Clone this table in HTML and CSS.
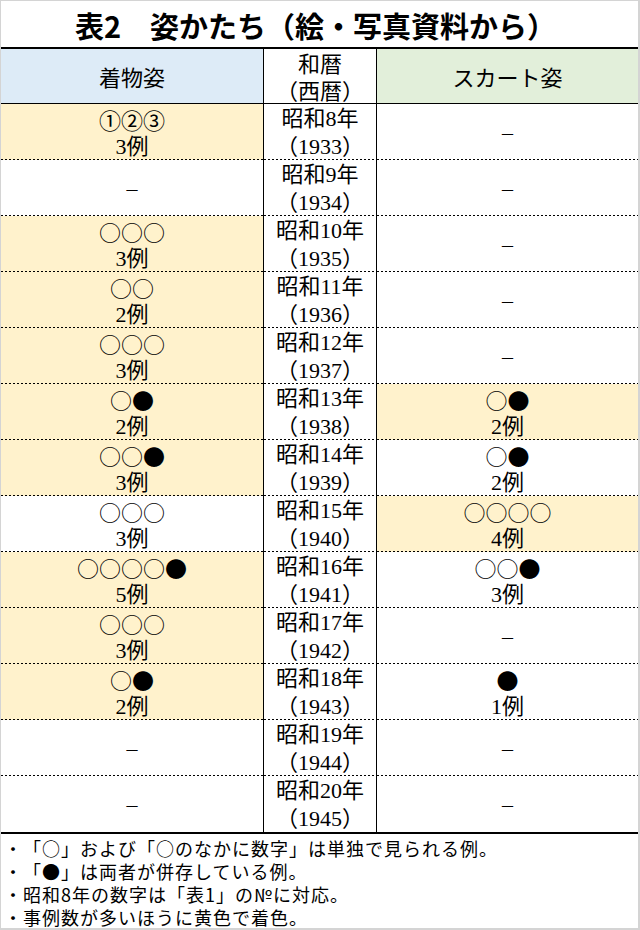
FILE: index.html
```html
<!DOCTYPE html>
<html lang="ja">
<head>
<meta charset="utf-8">
<title>表2 姿かたち</title>
<link rel="stylesheet" href="styles.css">
</head>
<body>
<div class="page">
  <div class="title">表2　姿かたち（絵・写真資料から）</div>
  <div class="grid">
    <div class="hd blue">着物姿</div>
    <div class="hd mid"><span>和暦</span><span>（西暦）</span></div>
    <div class="hd green">スカート姿</div>

    <div class="c y dot"><span class="sym">①②③</span><span>3例</span></div>
    <div class="c mid dot"><span>昭和8年</span><span>（1933）</span></div>
    <div class="c dot"><span class="dash">–</span></div>

    <div class="c dot"><span class="dash">–</span></div>
    <div class="c mid dot"><span>昭和9年</span><span>（1934）</span></div>
    <div class="c dot"><span class="dash">–</span></div>

    <div class="c y dot"><span class="sym">○○○</span><span>3例</span></div>
    <div class="c mid dot"><span>昭和10年</span><span>（1935）</span></div>
    <div class="c dot"><span class="dash">–</span></div>

    <div class="c y dot"><span class="sym">○○</span><span>2例</span></div>
    <div class="c mid dot"><span>昭和11年</span><span>（1936）</span></div>
    <div class="c dot"><span class="dash">–</span></div>

    <div class="c y dot"><span class="sym">○○○</span><span>3例</span></div>
    <div class="c mid dot"><span>昭和12年</span><span>（1937）</span></div>
    <div class="c dot"><span class="dash">–</span></div>

    <div class="c y dot"><span class="sym">○●</span><span>2例</span></div>
    <div class="c mid dot"><span>昭和13年</span><span>（1938）</span></div>
    <div class="c y dot"><span class="sym">○●</span><span>2例</span></div>

    <div class="c y dot"><span class="sym">○○●</span><span>3例</span></div>
    <div class="c mid dot"><span>昭和14年</span><span>（1939）</span></div>
    <div class="c dot"><span class="sym">○●</span><span>2例</span></div>

    <div class="c dot"><span class="sym">○○○</span><span>3例</span></div>
    <div class="c mid dot"><span>昭和15年</span><span>（1940）</span></div>
    <div class="c y dot"><span class="sym">○○○○</span><span>4例</span></div>

    <div class="c y dot"><span class="sym">○○○○●</span><span>5例</span></div>
    <div class="c mid dot"><span>昭和16年</span><span>（1941）</span></div>
    <div class="c dot"><span class="sym">○○●</span><span>3例</span></div>

    <div class="c y dot"><span class="sym">○○○</span><span>3例</span></div>
    <div class="c mid dot"><span>昭和17年</span><span>（1942）</span></div>
    <div class="c dot"><span class="dash">–</span></div>

    <div class="c y dot"><span class="sym">○●</span><span>2例</span></div>
    <div class="c mid dot"><span>昭和18年</span><span>（1943）</span></div>
    <div class="c dot"><span class="sym">●</span><span>1例</span></div>

    <div class="c dot"><span class="dash">–</span></div>
    <div class="c mid dot"><span>昭和19年</span><span>（1944）</span></div>
    <div class="c dot"><span class="dash">–</span></div>

    <div class="c"><span class="dash">–</span></div>
    <div class="c mid"><span>昭和20年</span><span>（1945）</span></div>
    <div class="c"><span class="dash">–</span></div>
  </div>
  <div class="notes">
    <p>・「○」および「○のなかに数字」は単独で見られる例。</p>
    <p>・「●」は両者が併存している例。</p>
    <p>・昭和8年の数字は「表1」の№に対応。</p>
    <p>・事例数が多いほうに黄色で着色。</p>
  </div>
</div>
</body>
</html>
```
FILE: styles.css
```css
* { box-sizing: border-box; }
html, body { margin: 0; padding: 0; background: #fff; }
.page {
  width: 640px;
  height: 930px;
  border-top: 1px solid #d4d4d4;
  border-left: 1px solid #d4d4d4;
  border-right: 2px solid #d4d4d4;
  border-bottom: 2px solid #d4d4d4;
  font-family: "Liberation Serif", "Noto Sans CJK JP", serif;
  color: #000;
  overflow: hidden;
  text-spacing-trim: space-all;
}
.title {
  height: 46px;
  display: flex;
  align-items: center;
  justify-content: center;
  font-family: "Noto Sans CJK JP", sans-serif;
  font-weight: 700;
  font-size: 29px;
  line-height: 46px;
  padding-right: 8px;
  padding-top: 2px;
}
.grid {
  display: grid;
  grid-template-columns: 262px 114px 1fr;
  border-top: 2px solid #000;
}
.hd {
  height: 55px;
  border-bottom: 1px solid #000;
  display: flex;
  flex-direction: column;
  align-items: center;
  justify-content: center;
  font-size: 22px;
  line-height: 27px;
  font-family: "Noto Sans CJK JP", sans-serif;
}
.blue { background: #ddebf7; }
.green { background: #e2efda; }
.c {
  height: 56px;
  display: flex;
  flex-direction: column;
  align-items: center;
  justify-content: center;
  font-size: 22px;
  line-height: 28px;
  padding-top: 2px;
}
.mid {
  border-left: 1px solid #000;
  border-right: 1px solid #000;
}
.y { background-color: #fff2cc; }
.dot {
  background-image: linear-gradient(90deg, #000 2px, transparent 2px);
  background-size: 4px 1px;
  background-repeat: repeat-x;
  background-position: 0 100%;
}
.sym { font-family: "Noto Sans CJK JP", sans-serif; }
.dash { font-family: "Liberation Serif", serif; }
.notes {
  border-top: 2px solid #000;
  padding: 3px 0 0 3px;
  font-family: "Noto Sans CJK JP", sans-serif;
  font-size: 18px;
  letter-spacing: 1px;
  line-height: 23px;
}
.notes p { margin: 0; }
```
